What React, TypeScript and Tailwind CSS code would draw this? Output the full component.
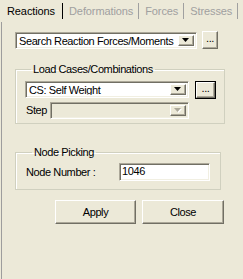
import React from "react";

const raised =
  "border border-t-white border-l-white border-r-[#716F64] border-b-[#716F64] shadow-[inset_-1px_-1px_0_#ACA899]";
const sunken =
  "border border-t-[#ACA899] border-l-[#ACA899] border-r-white border-b-white shadow-[inset_1px_1px_0_#716F64,inset_-1px_-1px_0_#F1EFE2]";

function Arrow({ disabled }: { disabled?: boolean }) {
  return (
    <div className={`w-[16px] h-full bg-[#ECE9D8] flex items-center justify-center ${raised}`}>
      <svg width="8" height="5" viewBox="0 0 8 5">
        {disabled && <path d="M1 1h7L4.5 5z" fill="#fff" />}
        <path d="M0 0h7L3.5 4z" fill={disabled ? "#ACA899" : "#000"} />
      </svg>
    </div>
  );
}

function Combo({ text, width, disabled }: { text?: string; width: string; disabled?: boolean }) {
  return (
    <div className={`${width} h-[17px] flex items-stretch p-[2px] ${sunken} ${disabled ? "bg-[#ECE9D8]" : "bg-white"}`}>
      <div className="flex-1 pl-[1px] leading-[13px] whitespace-nowrap overflow-hidden">{text}</div>
      <Arrow disabled={disabled} />
    </div>
  );
}

function Dots({ focus, cls }: { focus?: boolean; cls: string }) {
  return (
    <div className={`${cls} bg-[#ECE9D8] flex items-center justify-center ${focus ? "outline outline-1 outline-black" : ""} ${raised}`}>
      <span className="leading-none -mt-[3px]">...</span>
    </div>
  );
}

export default function App() {
  const tabs = ["Deformations", "Forces", "Stresses"];
  return (
    <div
      className="w-[243px] h-[279px] bg-[#ECE9D8] text-[11px] tracking-[-0.4px] text-black flex flex-col overflow-hidden"
      style={{ fontFamily: '"Liberation Sans", Arial, sans-serif' }}
    >
      {/* tab strip */}
      <div className="h-[22px] flex items-center pl-[2px] shrink-0 tracking-[-0.1px]">
        <div className="h-[16px] flex items-center pl-[5px] pr-[7px] border-r border-black">Reactions</div>
        {tabs.map((t) => (
          <div key={t} className="h-[16px] flex items-center pl-[6px] pr-[5px] border-r border-[#A0A0A0] text-[#A0A0A0]">
            {t}
          </div>
        ))}
      </div>

      {/* page */}
      <div className="flex-1 ml-[1px] border-l border-[#9D9D9D] flex flex-col pl-[13px]">
        <div className="flex items-center mt-[9px] gap-[5px]">
          <Combo text="Search Reaction Forces/Moments" width="w-[182px]" />
          <Dots cls="w-[16px] h-[18px]" />
        </div>

        <fieldset className="mt-[14px] w-[206px] border border-[#D0D0BF] shadow-[inset_1px_1px_0_#fff] px-[9px] pb-[2px]">
          <legend className="ml-[6px] px-[2px] leading-[13px]">Load Cases/Combinations</legend>
          <div className="flex items-center gap-[7px] mt-[5px]">
            <Combo text="CS: Self Weight" width="w-[164px]" />
            <Dots focus cls="w-[19px] h-[16px]" />
          </div>
          <div className="flex items-center mt-[4px] mb-[2px]">
            <span className="w-[25px] pl-[1px]">Step</span>
            <Combo width="w-[139px]" disabled />
          </div>
        </fieldset>

        <fieldset className="mt-[22px] w-[206px] border border-[#D0D0BF] shadow-[inset_1px_1px_0_#fff] px-[10px] pb-[8px]">
          <legend className="ml-[6px] px-[2px] leading-[13px]">Node Picking</legend>
          <div className="flex items-center mt-[4px]">
            <span className="w-[93px]">Node Number :</span>
            <div className={`w-[91px] h-[18px] bg-white pl-[2px] leading-[14px] ${sunken}`}>1046</div>
          </div>
        </fieldset>

        <div className="flex mt-[10px] ml-[40px] gap-[6px]">
          <div className={`w-[81px] h-[24px] flex items-center justify-center ${raised}`}>Apply</div>
          <div className={`w-[82px] h-[24px] flex items-center justify-center ${raised}`}>Close</div>
        </div>
      </div>
    </div>
  );
}
